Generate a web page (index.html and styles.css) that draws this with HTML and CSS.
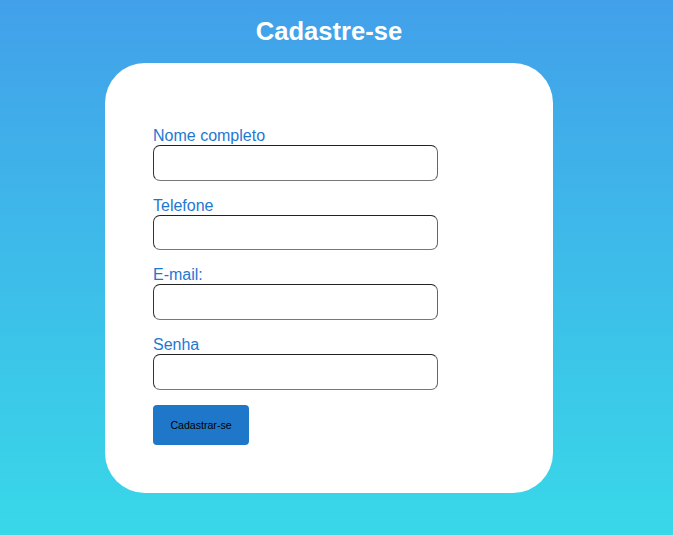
FILE: index.html
```html
<!DOCTYPE html>
<html lang="pt-BR">
<head>
<meta charset="utf-8">
<title>Cadastre-se</title>
<link rel="stylesheet" href="styles.css">
</head>
<body>
<main class="page">
  <h1 class="title">Cadastre-se</h1>
  <form class="card">
    <div class="field">
      <label class="label" for="nome">Nome completo</label>
      <input class="input" id="nome" type="text">
    </div>
    <div class="field">
      <label class="label" for="tel">Telefone</label>
      <input class="input" id="tel" type="tel">
    </div>
    <div class="field">
      <label class="label" for="email">E-mail:</label>
      <input class="input" id="email" type="email">
    </div>
    <div class="field">
      <label class="label" for="senha">Senha</label>
      <input class="input" id="senha" type="password">
    </div>
    <button class="btn" type="button">Cadastrar-se</button>
  </form>
</main>
</body>
</html>
```
FILE: styles.css
```css
html, body {
  margin: 0;
  padding: 0;
}
body {
  min-height: 535px;
  background: linear-gradient(to bottom, #42a0ea 0%, #38d8e8 100%);
  font-family: "Liberation Sans", Arial, sans-serif;
}
.page {
  width: 658px;
  display: flex;
  flex-direction: column;
  align-items: center;
}
.title {
  margin: 0;
  padding-top: 16px;
  height: 63px;
  box-sizing: border-box;
  font-size: 25.6px;
  line-height: 30px;
  font-weight: bold;
  color: #fff;
}
.card {
  width: 448px;
  height: 430px;
  box-sizing: border-box;
  background: #fff;
  border-radius: 40px;
  padding: 64px 48px 48px;
  display: flex;
  flex-direction: column;
  align-items: flex-start;
}
.field {
  display: flex;
  flex-direction: column;
  margin-bottom: 16px;
}
.label {
  font-size: 16px;
  line-height: 18px;
  color: #1e78d2;
}
.input {
  width: 285px;
  height: 35.67px;
  box-sizing: border-box;
  border: 1px solid;
  border-color: #222 #666 #777 #333;
  border-radius: 7px;
  background: #fff;
  margin: 0;
  padding: 0 6px;
  font-family: inherit;
  font-size: 14px;
}
.btn {
  margin-top: -1px;
  width: 96px;
  height: 40px;
  border: none;
  border-radius: 4px;
  background: #1f77ca;
  color: #000;
  font-family: "Liberation Sans", Arial, sans-serif;
  font-size: 10.6px;
  padding: 0;
}
```
